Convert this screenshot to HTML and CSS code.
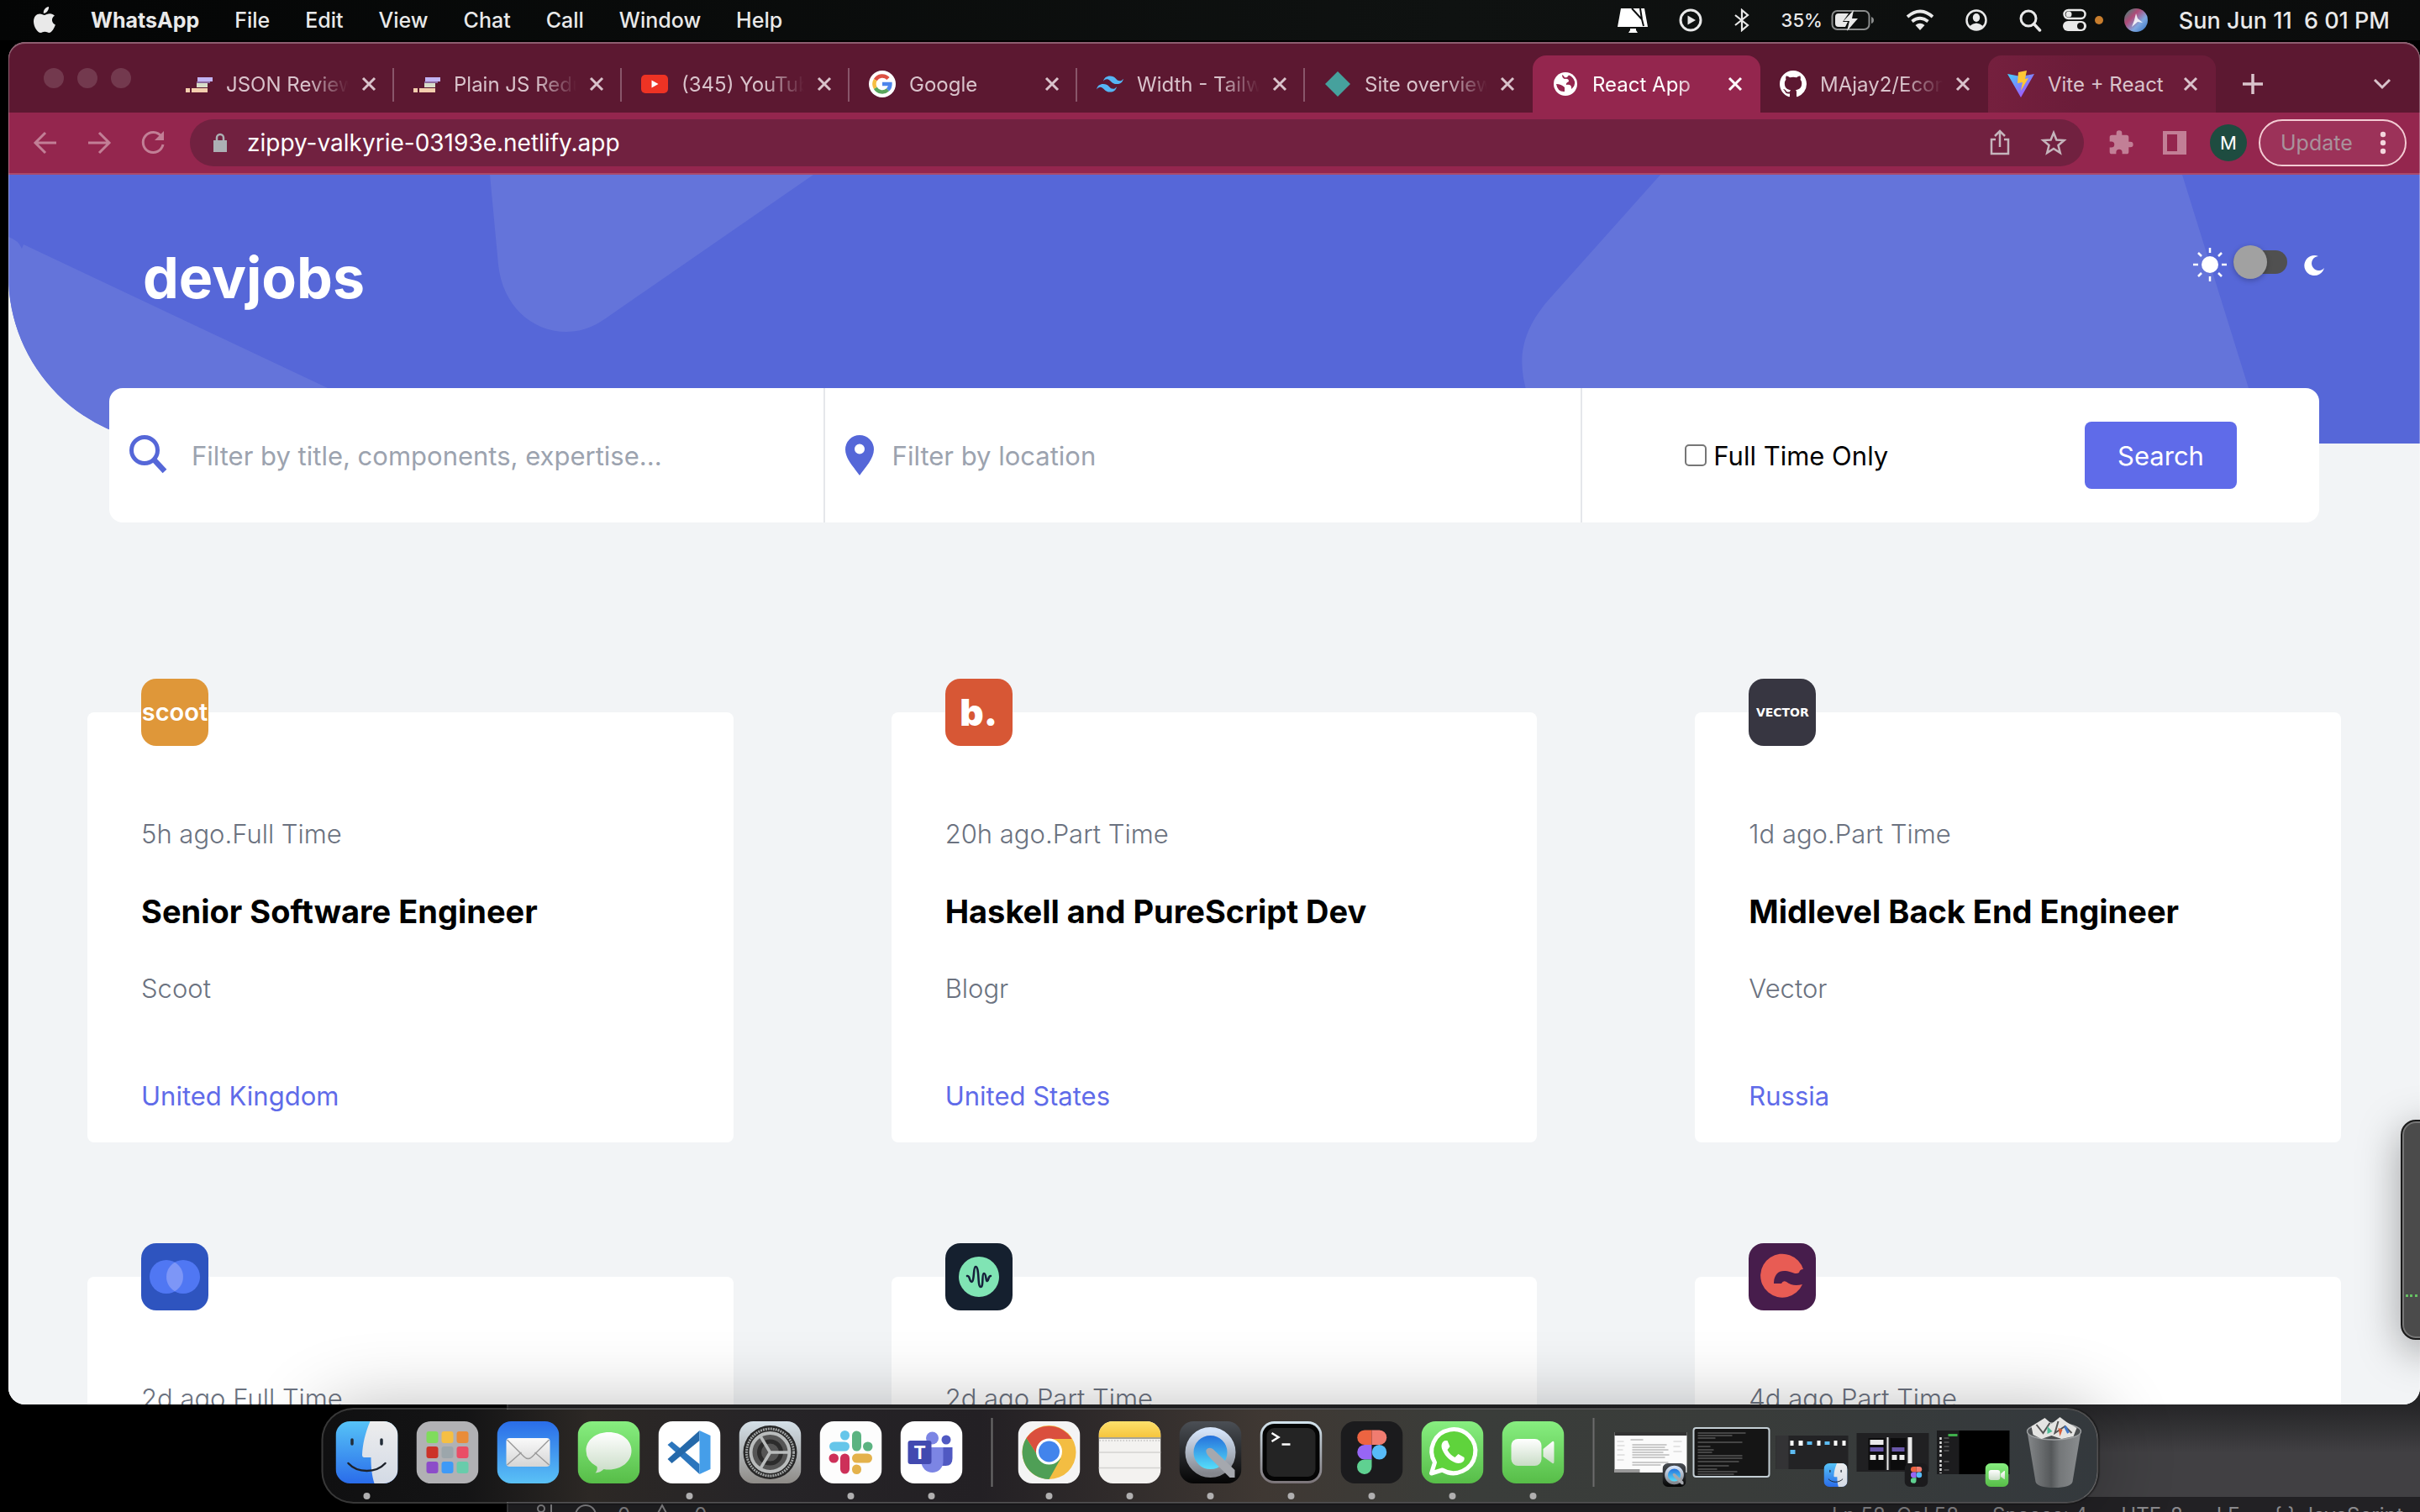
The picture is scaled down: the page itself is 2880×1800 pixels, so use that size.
FILE: index.html
```html
<!DOCTYPE html>
<html lang="en">
<head>
<meta charset="utf-8">
<title>React App</title>
<link rel="stylesheet" href="styles.css">
</head>
<body>

<svg class="defs" aria-hidden="true">
  <defs>
    <linearGradient id="g-blue" x2="0" y2="1"><stop offset="0" stop-color="#56c3f7"/><stop offset="1" stop-color="#2a6cea"/></linearGradient>
    <linearGradient id="g-face" x2="0" y2="1"><stop offset="0" stop-color="#ededee"/><stop offset="1" stop-color="#d3dae5"/></linearGradient>
    <linearGradient id="g-mail" x2="0" y2="1"><stop offset="0" stop-color="#2a6de8"/><stop offset="1" stop-color="#5ac1f6"/></linearGradient>
    <linearGradient id="g-green" x2="0" y2="1"><stop offset="0" stop-color="#87ee80"/><stop offset="1" stop-color="#57bd48"/></linearGradient>
    <linearGradient id="g-white" x2="0" y2="1"><stop offset="0" stop-color="#ffffff"/><stop offset="1" stop-color="#c9dcc6"/></linearGradient>
    <linearGradient id="g-paper" x2="0" y2="1"><stop offset="0" stop-color="#fafafa"/><stop offset="1" stop-color="#d5d5d5"/></linearGradient>
    <linearGradient id="g-gear" x2="0" y2="1"><stop offset="0" stop-color="#d5e0e8"/><stop offset="1" stop-color="#8e8b87"/></linearGradient>
    <linearGradient id="g-qt" x2="0" y2="1"><stop offset="0" stop-color="#4b4f55"/><stop offset="1" stop-color="#050505"/></linearGradient>
    <linearGradient id="g-ring" x2="0" y2="1"><stop offset="0" stop-color="#d4e3f8"/><stop offset="1" stop-color="#84878d"/></linearGradient>
    <linearGradient id="g-lens" x2="0" y2="1"><stop offset="0" stop-color="#1f63d8"/><stop offset="1" stop-color="#5cecfd"/></linearGradient>
    <linearGradient id="g-note" x2="0" y2="1"><stop offset="0" stop-color="#fde06c"/><stop offset="1" stop-color="#f6c53d"/></linearGradient>
    <linearGradient id="g-term" x2="0" y2="1"><stop offset="0" stop-color="#d3e4ee"/><stop offset="1" stop-color="#7b7478"/></linearGradient>
    <linearGradient id="g-bin"><stop offset="0" stop-color="#85888a"/><stop offset=".45" stop-color="#55585a"/><stop offset=".6" stop-color="#747779"/><stop offset="1" stop-color="#8a8d8f"/></linearGradient>
    <linearGradient id="g-vite" x2="1" y2="1"><stop offset="0" stop-color="#41d1ff"/><stop offset="1" stop-color="#bd34fe"/></linearGradient>
    <linearGradient id="g-siri" x2="1" y2="1"><stop offset="0" stop-color="#2f8f78"/><stop offset=".35" stop-color="#b04a78"/><stop offset=".65" stop-color="#7fa8e0"/><stop offset="1" stop-color="#2f6fc0"/></linearGradient>
    <clipPath id="tile"><rect width="74" height="74" rx="17"/></clipPath>
  </defs>

  <symbol id="app-finder" viewBox="0 0 74 74">
    <g clip-path="url(#tile)">
      <rect width="74" height="74" fill="url(#g-blue)"/>
      <path d="M41 0C35 14 32 28 31.500 40Q31.500 43 34 43H42C42 55 43 64 46 74H74V0Z" fill="url(#g-face)"/>
    </g>
    <path d="M19.500 22V27M54.500 22V27" stroke="#222c38" stroke-width="3.500" stroke-linecap="round"/>
    <path d="M15 50C26 62 48 62 59 50" fill="none" stroke="#1d222b" stroke-width="2.500" stroke-linecap="round"/>
  </symbol>
  <symbol id="app-quicktime" viewBox="0 0 74 74">
    <rect width="74" height="74" rx="17" fill="url(#g-qt)"/>
    <circle cx="37" cy="37" r="25" fill="url(#g-lens)" stroke="url(#g-ring)" stroke-width="10"/>
    <path d="M32 34Q35 30 40 33L66 58V67H60L36 43Q31 38 32 34Z" fill="#a5a8ae"/>
  </symbol>
  <symbol id="app-figma" viewBox="0 0 74 74">
    <rect width="74" height="74" rx="17" fill="#1b1b1d"/>
    <path d="M37 10.500V28H28.500a8.750 8.750 0 0 1 0-17.500Z" fill="#ed6441"/>
    <path d="M37 10.500H46a8.750 8.750 0 0 1 0 17.500H37Z" fill="#f07c70"/>
    <path d="M37 28V45.500H28.500a8.750 8.750 0 0 1 0-17.500Z" fill="#9766f5"/>
    <circle cx="46" cy="36.750" r="8.750" fill="#57bbf8"/>
    <path d="M37 45.500V54a8.750 8.750 0 1 1-8.750-8.500Z" fill="#5fd191"/>
  </symbol>
  <symbol id="app-facetime" viewBox="0 0 74 74">
    <rect width="74" height="74" rx="17" fill="url(#g-green)"/>
    <rect x="11" y="21" width="36" height="32" rx="8" fill="url(#g-white)"/>
    <path d="M49 33 60 24Q62 23 62 26V48Q62 51 60 50L49 42Z" fill="url(#g-white)"/>
  </symbol>
  <symbol id="i-sprint" viewBox="0 0 32 32">
    <path d="M14 8H32V13H14Z" fill="#c3b4f4"/><path d="M13 13H29V15H13Z" fill="#8d6b9f"/><path d="M13 15H26V20H13Z" fill="#d8ddc9"/><path d="M0 21H26V26H0Z" fill="#f4cfae"/><path d="M5 21H7V26H5Z" fill="#5d1831"/>
  </symbol>
  <symbol id="i-close" viewBox="0 0 24 24"><path d="M5 5 19 19M19 5 5 19" stroke="currentColor" stroke-width="3"/></symbol>
</svg>

<header class="menubar">
  <nav class="menus" aria-label="Menu bar">
    <button class="menu" aria-label="Apple"><svg class="apple" viewBox="0 0 26 32"><path fill="currentColor" d="M18 0c.3 2-.6 4-1.700 5.400C15 7 13.300 7.800 11.800 7.700c-.3-2 .6-3.900 1.700-5.200C14.600 1.100 16.500.1 18 0ZM25 10.800c-4.400 2.600-3.900 8.700.9 10.700C25 24.500 21.800 31 18.400 31c-2 0-2.700-1.200-5-1.200S10.300 31 8.400 31C4.400 31 0 23.500 0 17.500 0 11.500 3.700 8.400 7.300 8.400c2.400 0 4.300 1.500 5.800 1.500 1.400 0 3.600-1.600 6.400-1.600 2 0 4.200.9 5.500 2.500Z"/></svg></button>
    <button class="menu menu-app">WhatsApp</button>
    <button class="menu">File</button>
    <button class="menu">Edit</button>
    <button class="menu">View</button>
    <button class="menu">Chat</button>
    <button class="menu">Call</button>
    <button class="menu">Window</button>
    <button class="menu">Help</button>
  </nav>
  <div class="extras">
    <svg width="36" height="32" viewBox="0 0 36 32"><path fill="#fff" d="M4 2H32L36 24H0ZM15 26H22V28L24 31H13L15 28Z"/><path d="M17 2 29 15 31 23M27 2 29 15" stroke="#0d0f0f" stroke-width="2" fill="none"/></svg>
    <svg width="28" height="28" viewBox="0 0 28 28"><circle cx="14" cy="14" r="12" fill="none" stroke="currentColor" stroke-width="3"/><path d="M10.500 8.500 20 14 10.500 19.500Z" fill="currentColor"/></svg>
    <svg width="20" height="28" viewBox="0 0 20 28"><path d="M2 8 17 20 10 26V2L17 8 2 20" fill="none" stroke="currentColor" stroke-width="2.200"/></svg>
    <span class="battery">35%
      <svg width="52" height="26" viewBox="0 0 52 26"><rect x="1.500" y="2" width="44" height="22" rx="6" fill="none" stroke="#8a8c8c" stroke-width="2"/><path d="M48 9Q51 10 51 13T48 17Z" fill="#8a8c8c"/><path d="M5 9Q5 5 9 5H21L14 15H20L17 21H9Q5 21 5 17Z" fill="currentColor"/><path d="M27 1 15 14H22L19 26 32 11H25Z" fill="currentColor"/></svg>
    </span>
    <svg width="34" height="26" viewBox="0 0 34 26"><path d="M2 9Q17-4 32 9M7.500 14.500Q17 7 26.500 14.500" fill="none" stroke="currentColor" stroke-width="3.800"/><path d="M11.500 19Q17 14.500 22.500 19L17 25Z" fill="currentColor"/></svg>
    <svg width="26" height="26" viewBox="0 0 26 26"><circle cx="13" cy="13" r="11.500" fill="none" stroke="currentColor" stroke-width="2.500"/><ellipse cx="13" cy="10" rx="4.200" ry="5" fill="currentColor"/><path d="M5 20Q13 13 21 20 17 25 13 25T5 20Z" fill="currentColor"/></svg>
    <div class="extras-tail">
      <svg width="28" height="28" viewBox="0 0 28 28"><circle cx="12" cy="12" r="9" fill="none" stroke="currentColor" stroke-width="3"/><path d="M18.500 18.500 25.500 26" stroke="currentColor" stroke-width="3.500" stroke-linecap="round"/></svg>
      <span class="control"><svg width="28" height="28" viewBox="0 0 28 28"><rect x="1.500" y="2" width="25" height="10" rx="5" fill="none" stroke="currentColor" stroke-width="2.500"/><circle cx="7" cy="7" r="3.500" fill="currentColor"/><rect x="0" y="15" width="28" height="12" rx="6" fill="currentColor"/><circle cx="21" cy="21" r="4" fill="#111"/></svg><i class="mic-dot"></i></span>
      <svg width="28" height="28" viewBox="0 0 28 28"><circle cx="14" cy="14" r="14" fill="url(#g-siri)"/><path d="M14 6 16 12 22 17 16 16 9 22 12 14Z" fill="#fff" opacity=".85"/></svg>
    </div>
    <time>Sun Jun 11&nbsp; 6 01 PM</time>
  </div>
</header>

<div class="editor" aria-hidden="true">
  <div class="editor-status">
    <span class="status-left"><svg width="20" height="28" viewBox="0 0 20 28"><circle cx="5" cy="6" r="4" fill="none" stroke="currentColor" stroke-width="2"/><path d="M17 1V26" stroke="currentColor" stroke-width="2"/></svg><svg width="28" height="28" viewBox="0 0 28 28"><circle cx="14" cy="14" r="12" fill="none" stroke="currentColor" stroke-width="2"/></svg>0<svg width="28" height="28" viewBox="0 0 28 28"><path d="M14 2 27 26H1Z" fill="none" stroke="currentColor" stroke-width="2"/></svg>0</span>
    <span class="status-right"><span>Ln 58, Col 58</span><span>Spaces: 4</span><span>UTF-8</span><span>LF</span><span>{ } JavaScript</span></span>
  </div>
</div>

<section class="browser">
  <div class="tabstrip">
    <div class="lights"><i></i><i></i><i></i></div>
    <div class="tabs" role="tablist">
      <div class="tab" role="tab"><svg class="fav"><use href="#i-sprint"/></svg><span class="tab-title">JSON Review</span><button class="tab-close" aria-label="Close"><svg><use href="#i-close"/></svg></button></div>
      <div class="tab" role="tab"><svg class="fav"><use href="#i-sprint"/></svg><span class="tab-title">Plain JS Redux</span><button class="tab-close" aria-label="Close"><svg><use href="#i-close"/></svg></button></div>
      <div class="tab" role="tab"><svg class="fav" viewBox="0 0 32 32"><rect x="0" y="5" width="32" height="22" rx="5" fill="#ee3324"/><path d="M12.500 11.500 20.500 16 12.500 20.500Z" fill="#fff"/></svg><span class="tab-title">(345) YouTube</span><button class="tab-close" aria-label="Close"><svg><use href="#i-close"/></svg></button></div>
      <div class="tab" role="tab"><svg class="fav" viewBox="0 0 32 32"><circle cx="16" cy="16" r="16" fill="#fff"/><g fill="none" stroke-width="4.500"><path d="M23 9.500A9.500 9.500 0 0 0 7.800 11.200" stroke="#dd5144"/><path d="M7.800 11.200a9.500 9.500 0 0 0 0 9.600" stroke="#f6be42"/><path d="M7.800 20.800A9.500 9.500 0 0 0 22.500 22.900" stroke="#58a65c"/><path d="M22.500 22.900Q25.500 20 25.400 16H16" stroke="#4d86ec"/></g></svg><span class="tab-title">Google</span><button class="tab-close" aria-label="Close"><svg><use href="#i-close"/></svg></button></div>
      <div class="tab" role="tab"><svg class="fav" viewBox="0 0 32 32"><path fill="#55b6f5" d="M8 12.800C9 8.600 11.700 6.500 16 6.500c6.400 0 7.200 4.800 10.400 5.600 2.100.5 4-.3 5.600-2.400-1 4.300-3.700 6.400-8 6.400-6.400 0-7.200-4.800-10.400-5.600-2.100-.5-4 .2-5.600 2.300ZM0 22.400C1 18.100 3.700 16 8 16c6.400 0 7.200 4.800 10.400 5.600 2.100.5 4-.3 5.600-2.400-1 4.300-3.700 6.400-8 6.400-6.400 0-7.200-4.800-10.400-5.600-2.100-.5-4 .3-5.600 2.400Z"/></svg><span class="tab-title">Width - Tailwind</span><button class="tab-close" aria-label="Close"><svg><use href="#i-close"/></svg></button></div>
      <div class="tab" role="tab"><svg class="fav" viewBox="0 0 32 32"><path d="M16 1 31 16 16 31 1 16Z" fill="#46a19d"/></svg><span class="tab-title">Site overview</span><button class="tab-close" aria-label="Close"><svg><use href="#i-close"/></svg></button></div>
      <div class="tab tab-active" role="tab" aria-selected="true"><svg class="fav" viewBox="0 0 32 32"><circle cx="16" cy="16" r="14" fill="#fff"/><path d="M5 16Q11 16 15 20V25Q7 26 5 16ZM12 5Q12 9 15 10 20 9 20 13 16 15 17 17 24 16 23 22 28 18 27 13 25 7 20 5.500 18 9 15 8 14 6 12 5Z" fill="#94264e"/></svg><span class="tab-title">React App</span><button class="tab-close" aria-label="Close"><svg><use href="#i-close"/></svg></button></div>
      <div class="tab" role="tab"><svg class="fav" viewBox="0 0 16 16"><path fill="#fff" d="M8 0C3.580 0 0 3.580 0 8c0 3.540 2.290 6.530 5.470 7.590.4.070.55-.17.55-.38 0-.19-.01-.82-.01-1.490-2.010.37-2.530-.49-2.690-.94-.09-.23-.48-.94-.82-1.130-.28-.15-.68-.52-.01-.53.63-.01 1.080.58 1.230.82.72 1.210 1.870.87 2.330.66.070-.52.28-.87.51-1.070-1.780-.2-3.640-.89-3.640-3.950 0-.87.31-1.590.82-2.150-.08-.2-.36-1.020.08-2.120 0 0 .67-.21 2.200.82.64-.18 1.320-.27 2-.27s1.360.09 2 .27c1.530-1.040 2.200-.82 2.200-.82.44 1.100.16 1.920.08 2.120.51.56.82 1.270.82 2.150 0 3.070-1.870 3.750-3.650 3.950.29.25.54.73.54 1.480 0 1.070-.01 1.930-.01 2.200 0 .21.15.46.55.38A8.010 8.010 0 0 0 16 8c0-4.420-3.580-8-8-8Z"/></svg><span class="tab-title">MAjay2/Ecommerce</span><button class="tab-close" aria-label="Close"><svg><use href="#i-close"/></svg></button></div>
      <div class="tab tab-hover" role="tab"><svg class="fav" viewBox="0 0 32 32"><path d="M0 4 16 32 32 4 16 7Z" fill="url(#g-vite)"/><path d="M13 2 23 0 21 10 25 9 16 24 18 14 12 15Z" fill="#fdc735"/></svg><span class="tab-title tab-title-whole">Vite + React</span><button class="tab-close" aria-label="Close"><svg><use href="#i-close"/></svg></button></div>
    </div>
    <button class="strip-button" aria-label="New tab"><svg viewBox="0 0 24 24"><path d="M12 0V24M0 12H24" stroke="currentColor" stroke-width="3.500"/></svg></button>
    <button class="strip-button strip-more" aria-label="Search tabs"><svg viewBox="0 0 24 24"><path d="M3 7 12 16 21 7" fill="none" stroke="currentColor" stroke-width="3"/></svg></button>
  </div>

  <div class="toolbar">
    <div class="nav-buttons">
      <button class="tool" aria-label="Back"><svg viewBox="0 0 32 32"><path d="M29 16H5M16 4 4 16 16 28" fill="none" stroke="currentColor" stroke-width="3"/></svg></button>
      <button class="tool" aria-label="Forward"><svg viewBox="0 0 32 32"><path d="M3 16H27M16 4 28 16 16 28" fill="none" stroke="currentColor" stroke-width="3"/></svg></button>
      <button class="tool" aria-label="Reload"><svg viewBox="0 0 32 32"><path d="M26 8.500A12 12 0 1 0 28 18" fill="none" stroke="currentColor" stroke-width="3"/><path d="M29 2V13H18Z" fill="currentColor"/></svg></button>
    </div>
    <div class="omnibox">
      <svg class="lock" viewBox="0 0 20 24"><path d="M2 9H18V23H2Z" fill="currentColor"/><path d="M6 10V6a4 4 0 0 1 8 0V10" fill="none" stroke="currentColor" stroke-width="2.500"/></svg>
      <input class="url" type="text" aria-label="Address" value="zippy-valkyrie-03193e.netlify.app">
      <button class="tool" aria-label="Share"><svg viewBox="0 0 32 32"><path d="M11 12H6V29H26V12H21M16 21V3M10 8 16 2 22 8" fill="none" stroke="currentColor" stroke-width="2.500"/></svg></button>
      <button class="tool" aria-label="Bookmark"><svg viewBox="0 0 32 32"><path d="M16 4 19.400 12.500 28.500 13 21.500 19 23.800 28 16 23 8.200 28 10.500 19 3.500 13 12.600 12.500Z" fill="none" stroke="currentColor" stroke-width="2.500"/></svg></button>
    </div>
    <div class="tools">
      <button class="tool" aria-label="Extensions"><svg viewBox="0 0 24 24"><path fill="currentColor" d="M20.500 11H19V7a2 2 0 0 0-2-2h-4V3.500a2.500 2.500 0 0 0-5 0V5H4a2 2 0 0 0-2 2v3.800h1.500a2.700 2.700 0 0 1 0 5.400H2V20a2 2 0 0 0 2 2h3.800v-1.500a2.700 2.700 0 0 1 5.400 0V22H17a2 2 0 0 0 2-2v-4h1.500a2.500 2.500 0 0 0 0-5Z"/></svg></button>
      <button class="tool" aria-label="Side panel"><svg viewBox="0 0 32 32"><path fill="currentColor" fill-rule="evenodd" d="M2 2H30V30H2ZM7 6V26H19V6Z"/></svg></button>
    </div>
    <button class="avatar" aria-label="Profile">M</button>
    <button class="update">Update<svg viewBox="0 0 8 28"><g fill="#f3d6dd"><circle cx="4" cy="4" r="3.200"/><circle cx="4" cy="14" r="3.200"/><circle cx="4" cy="24" r="3.200"/></g></svg></button>
  </div>

  <main class="page">
    <header class="hero">
      <svg class="hero-shapes" viewBox="0 0 2870 320" preserveAspectRatio="xMidYMin slice"><g fill="#6474da"><path d="M0 74Q12 78 16 88L18 83 520 320H0Z"/><path d="M573 0 583 107C588 155 622 187 664 187 686 187 702 178 718 166L958 0Z"/><path d="M1966 0 1832 150C1798 190 1796 224 1808 262L1830 320H2740L2666 254 2587 0Z"/></g></svg>
      <h1 class="brand">devjobs</h1>
      <div class="theme">
        <svg width="40" height="48" viewBox="0 0 40 48"><circle cx="20" cy="27" r="10" fill="#fff"/><path d="M20 7V13M20 41V47M0 27H6M34 27H40M6 13 10 17M30 37 34 41M34 13 30 17M10 37 6 41" stroke="#fff" stroke-width="2.500"/></svg>
        <input class="switch" type="checkbox" role="switch" aria-label="Dark mode">
        <svg class="moon" width="24" height="48" viewBox="0 0 24 48"><path d="M17 17A12 12 0 1 0 24 31 8.500 8.500 0 1 1 17 17Z" fill="#fff"/></svg>
      </div>
    </header>

    <form class="search" onsubmit="return false">
      <label class="field"><svg width="48" height="52" viewBox="0 0 48 52"><circle cx="18" cy="20" r="15.500" fill="none" stroke="#5567d8" stroke-width="5"/><path d="M29 31 42 45" stroke="#5567d8" stroke-width="6.500"/></svg><input class="field-title" type="text" aria-label="Title" placeholder="Filter by title, components, expertise..."></label>
      <label class="field"><svg width="34" height="48" viewBox="0 0 34 48"><path fill="#5567d8" fill-rule="evenodd" d="M17 0A17 17 0 0 1 34 17C34 28 24 38 17 48 10 38 0 28 0 17A17 17 0 0 1 17 0ZM17 10.500A6 6 0 1 0 17 22.500 6 6 0 0 0 17 10.500Z"/></svg><input class="field-place" type="text" aria-label="Location" placeholder="Filter by location"></label>
      <div class="actions">
        <label class="fulltime"><input type="checkbox">Full Time Only</label>
        <button class="submit">Search</button>
      </div>
    </form>

    <div class="jobs">
      <article class="job"><div class="logo logo-scoot">scoot</div><p class="meta">5h ago.Full Time</p><h2>Senior Software Engineer</h2><p class="company">Scoot</p><p class="place">United Kingdom</p></article>
      <article class="job"><div class="logo logo-blogr">b.</div><p class="meta">20h ago.Part Time</p><h2>Haskell and PureScript Dev</h2><p class="company">Blogr</p><p class="place">United States</p></article>
      <article class="job"><div class="logo logo-vector">VECTOR</div><p class="meta">1d ago.Part Time</p><h2>Midlevel Back End Engineer</h2><p class="company">Vector</p><p class="place">Russia</p></article>
      <article class="job"><div class="logo logo-office"><svg viewBox="0 0 80 80"><circle cx="30" cy="40" r="20" fill="#5077f3"/><circle cx="50" cy="40" r="20" fill="#5077f3"/><path d="M40 22.700a20 20 0 0 1 0 34.600 20 20 0 0 1 0-34.600Z" fill="#7d96f7"/></svg></div><p class="meta">2d ago.Full Time</p></article>
      <article class="job"><div class="logo logo-pod"><svg viewBox="0 0 80 80"><circle cx="40" cy="40" r="24" fill="#80e4b4"/><path d="M26 39C29 38 29 46 31 46 35 46 33 28 36 28 41 28 38 52 42 52 46 52 43 36 46 36 49 36 48 46 50 45 52 44 51 39 54 39" fill="none" stroke="#15203a" stroke-width="2.500" stroke-linecap="round"/></svg></div><p class="meta">2d ago.Part Time</p></article>
      <article class="job"><div class="logo logo-creative"><svg viewBox="0 0 80 80"><path d="M65 31A26 26 0 1 0 64 49C56 51 50 50 45 46Q41 44 39 48H30C30 37 36 32 44 33 52 34 56 38 60 35Q61 31 65 31Z" fill="#e85c54"/></svg></div><p class="meta">4d ago.Part Time</p></article>
    </div>
  </main>
</section>

<aside class="side-window" aria-hidden="true"></aside>

<nav class="dock" aria-label="Dock">
  <button class="app running" aria-label="Finder"><svg><use href="#app-finder"/></svg></button>
  <button class="app" aria-label="Launchpad"><svg viewBox="0 0 74 74"><rect width="74" height="74" rx="17" fill="#b1b1b4"/><g><rect x="12" y="12" width="14" height="14" rx="3" fill="#7fdc5c"/><rect x="30" y="12" width="14" height="14" rx="3" fill="#f5bf43"/><rect x="48" y="12" width="14" height="14" rx="3" fill="#e98c39"/><rect x="12" y="30" width="14" height="14" rx="3" fill="#cc3328"/><rect x="30" y="30" width="14" height="14" rx="3" fill="#9ca6ab"/><rect x="48" y="30" width="14" height="14" rx="3" fill="#ea4e66"/><rect x="12" y="48" width="14" height="14" rx="3" fill="#8c4cc9"/><rect x="30" y="48" width="14" height="14" rx="3" fill="#3f9af6"/><rect x="48" y="48" width="14" height="14" rx="3" fill="#68ccab"/></g></svg></button>
  <button class="app" aria-label="Mail"><svg viewBox="0 0 74 74"><rect width="74" height="74" rx="17" fill="url(#g-mail)"/><rect x="11" y="20" width="52" height="34" rx="4" fill="url(#g-paper)"/><path d="M12 52 29 37M62 52 45 37M12 22 32 42Q37 47 42 42L62 22" fill="none" stroke="#9b9b9b" stroke-width="1.500"/></svg></button>
  <button class="app" aria-label="Messages"><svg viewBox="0 0 74 74"><rect width="74" height="74" rx="17" fill="url(#g-green)"/><path d="M37 13C52 13 64 22 64 35S52 57.500 37 57.500Q34 57.500 31 57 27 61 21 61.500 24 58 23 54 10 47 10 35C10 22 22 13 37 13Z" fill="url(#g-white)"/></svg></button>
  <button class="app running" aria-label="Visual Studio Code"><svg viewBox="0 0 74 74"><rect width="74" height="74" rx="17" fill="#fff"/><path d="M11 28 16 24 49 51V63Z" fill="#2c76bd"/><path d="M11 45 16 50 49 23V11Z" fill="#2569aa"/><path d="M49 11 62 17V57L49 63Z" fill="#459ee9"/></svg></button>
  <button class="app" aria-label="System Settings"><svg viewBox="0 0 74 74"><rect width="74" height="74" rx="17" fill="url(#g-gear)"/><circle cx="37" cy="37" r="32" fill="#272727"/><circle cx="37" cy="37" r="28" fill="none" stroke="#9fa2a2" stroke-width="3" stroke-dasharray="2 1"/><circle cx="37" cy="37" r="23" fill="#555" stroke="#b9bcbc" stroke-width="4"/><circle cx="37" cy="37" r="13" fill="none" stroke="#2c2c2c" stroke-width="5"/><path d="M37 37H60M37 37 25 17M37 37 25 57" stroke="#b9bcbc" stroke-width="3.500"/></svg></button>
  <button class="app running" aria-label="Slack"><svg viewBox="0 0 74 74"><rect width="74" height="74" rx="17" fill="#fdfdfd"/><g stroke-width="11" stroke-linecap="round"><path d="M17 30H30M30 16.500V17" stroke="#66c6ea"/><path d="M44 17V30M57 30H57.500" stroke="#5bb381"/><path d="M44 44H57M44 57V57.500" stroke="#e4b24b"/><path d="M30 44V57M16.500 44H17" stroke="#cd3059"/></g></svg></button>
  <button class="app running" aria-label="Microsoft Teams"><svg viewBox="0 0 74 74"><rect width="74" height="74" rx="17" fill="#fff"/><circle cx="38" cy="20" r="7.500" fill="#7c85e4"/><circle cx="54.500" cy="22" r="5.500" fill="#5059c2"/><path d="M48 31H62V44Q62 53 54 53H48Z" fill="#5059c2"/><path d="M25 31H51V48A13 13 0 0 1 25 48Z" fill="#7c85e4"/><rect x="9" y="23" width="28" height="28" rx="3" fill="#4249b0"/><text x="23" y="45" text-anchor="middle" class="t-letter">T</text></svg></button>
  <i class="dock-line"></i>
  <button class="app running" aria-label="Google Chrome"><svg viewBox="0 0 74 74"><rect width="74" height="74" rx="17" fill="#f4f4f4"/><circle cx="37" cy="37" r="32" fill="#f3bd42"/><path d="M10 20A32 32 0 0 0 37 69L51 44 37 50 25 43Z" fill="#4f9f56"/><path d="M10 20A32 32 0 0 1 64 21H37L25 43Z" fill="#da4f3e"/><circle cx="37" cy="36" r="15.500" fill="#fff"/><circle cx="37" cy="36" r="12.500" fill="#4284ec"/></svg></button>
  <button class="app running" aria-label="Notes"><svg viewBox="0 0 74 74"><g clip-path="url(#tile)"><rect width="74" height="74" fill="#f3f2f0"/><rect width="74" height="19" fill="url(#g-note)"/><path d="M0 20H74" stroke="#8b8878" stroke-width="1.500"/><path d="M1 23H74" stroke="#aaa" stroke-dasharray="1.500 2"/><path d="M0 37H74M0 55.500H74" stroke="#d3d2d0" stroke-width="1.500"/></g></svg></button>
  <button class="app running" aria-label="QuickTime Player"><svg><use href="#app-quicktime"/></svg></button>
  <button class="app running" aria-label="Terminal"><svg viewBox="0 0 74 74"><rect width="74" height="74" rx="17" fill="url(#g-term)"/><rect x="3" y="3" width="68" height="68" rx="14" fill="#050505"/><rect x="8" y="8" width="58" height="58" rx="9" fill="#242424"/><path d="M14 14 22 19 14 24M26 27.500H36" fill="none" stroke="#fff" stroke-width="2.500"/></svg></button>
  <button class="app running" aria-label="Figma"><svg><use href="#app-figma"/></svg></button>
  <button class="app running" aria-label="WhatsApp"><svg viewBox="0 0 74 74"><rect width="74" height="74" rx="17" fill="url(#g-green)"/><path d="M12 62 16 49A26 26 0 1 1 25 58Z" fill="#5fd33c" stroke="#fff" stroke-width="5" stroke-linejoin="round"/><path d="M28 23C24 25 23 29 25 34 29 43 36 49 44 50 49 50 52 47 51 43L44 39 40 43C36 41 33 38 31 34L34 30 31 23Z" fill="#fff"/></svg></button>
  <button class="app running" aria-label="FaceTime"><svg><use href="#app-facetime"/></svg></button>
  <i class="dock-line"></i>
  <div class="thumbs">
    <button class="thumb" aria-label="Recording"><svg viewBox="0 0 86 74"><rect y="13" width="86" height="48" fill="#fbfbfb"/><path d="M0 13H86V17H0Z" fill="#333"/><path d="M19 22H34M21 28H62M21 31H60M21 34H64M21 37H58M21 40H65M21 43H60M21 49H64M21 52H55" stroke="#9a9a9a"/><path d="M3 24H11M3 29H12M3 34H10M3 40H12M3 46H11M70 24H80M70 30H78M70 36H80" stroke="#ccc"/><path d="M0 57H30V61H0Z" fill="#999"/></svg><svg class="badge"><use href="#app-quicktime"/></svg></button>
    <button class="thumb" aria-label="Terminal window"><svg viewBox="0 0 86 74"><rect x="-2" y="8" width="90" height="58" rx="3" fill="#151515" stroke="#c3ced4" stroke-width="2"/><path d="M3 14H60M3 17H44M3 20H24M3 25H56M3 30H18M3 34H22M3 37H20M3 41H56M3 44H56M3 48H52M3 53H40M3 57H26M3 60H50M3 63H46" stroke="#777"/></svg></button>
    <button class="thumb" aria-label="Finder window"><svg viewBox="0 0 86 74"><rect y="17" width="86" height="40" fill="#232325"/><rect y="17" width="15" height="40" fill="#333335"/><g fill="#fff"><path d="M17 23H21V29H17ZM27 23H32V29H27ZM49 23H53V29H49ZM69 23H73V29H69ZM79 23H83V29H79Z"/></g><path d="M37 24H43V28H37ZM58 24H64V28H58ZM17 34H23V39H17Z" fill="#5dbcf2"/></svg><svg class="badge"><use href="#app-finder"/></svg></button>
    <button class="thumb" aria-label="Figma window"><svg viewBox="0 0 86 74"><rect y="14" width="86" height="46" fill="#202022"/><path d="M14 20H34V58H14ZM40 20H59V58H40Z" fill="#0c0c0d"/><path d="M16 22H32V28H16ZM16 40H23V46H16ZM26 40H32V46H26ZM42 40H48V46H42ZM51 40H57V46H51ZM36 19H38V58H36ZM61 19H66V50H61Z" fill="#eaeaea"/><path d="M16 31H32V36H16ZM42 31H57V36H42Z" fill="#6857a8"/></svg><svg class="badge"><use href="#app-figma"/></svg></button>
    <button class="thumb" aria-label="FaceTime window"><svg viewBox="0 0 86 74"><rect y="11" width="86" height="52" fill="#000"/><rect y="11" width="26" height="52" fill="#1c1c1e"/><rect x="13" y="15" width="11" height="3" fill="#3fae4b"/><path d="M4 19V42M4 46V62" stroke="#ddd" stroke-width="2.500" stroke-dasharray="3 2"/><path d="M8 20H14M8 25H14M8 30H14M8 35H14M8 48H14M8 58H14" stroke="#777"/></svg><svg class="badge"><use href="#app-facetime"/></svg></button>
  </div>
  <button class="trash" aria-label="Trash"><svg viewBox="0 0 66 86"><path d="M1 18 11 78Q13 85 33 85T55 78L65 18Z" fill="url(#g-bin)"/><ellipse cx="33" cy="18" rx="32" ry="10" fill="#4b4e50" stroke="#9da0a2" stroke-width="1.500"/><path d="M6 12 22 2 30 9 40 1 48 7 60 14 56 24 42 27 30 23 18 27 8 22Z" fill="#e4e4e2"/><path d="M12 10 20 20 28 8M38 6 34 20 46 12 54 20" fill="none" stroke="#555" stroke-width="2"/><path d="M25 12 31 18 25 21Z" fill="#4ebc96"/><path d="M38 14 43 16 40 24Z" fill="#d85f3a"/><path d="M46 12 50 20" stroke="#3f76c9" stroke-width="3"/></svg></button>
</nav>

</body>
</html>
```
FILE: styles.css
```css
* { box-sizing: border-box; }

html, body { height: 100%; }

body {
  margin: 0;
  position: relative;
  overflow: hidden;
  background: #000;
  color: #000;
  font-family: Inter, "Liberation Sans", sans-serif;
}

h1, h2, p { margin: 0; }
button, input { font: inherit; }
button { padding: 0; border: 0; background: none; color: inherit; }
svg { display: block; flex: none; }
.defs { position: absolute; width: 0; height: 0; }

/* System menu bar */
.menubar {
  display: flex;
  justify-content: space-between;
  align-items: center;
  height: 48px;
  padding: 0 36px 0 40px;
  background: linear-gradient(90deg, #040505, #0f1211 60%, #0b0c0c);
  color: #e9e9e9;
  font-size: 25px;
  font-weight: 500;
}
.menus { display: flex; align-items: center; gap: 42px; }
.apple { width: 26px; height: 32px; }
.menu-app { font-weight: 700; }
.extras { display: flex; align-items: center; gap: 37px; }
.extras-tail { display: flex; align-items: center; gap: 25px; }
.extras time { font-size: 27px; }
.battery { display: flex; align-items: center; gap: 10px; font-size: 22px; }
.control { display: flex; align-items: center; gap: 10px; }
.mic-dot { width: 10px; height: 10px; border-radius: 50%; background: #c87d2d; }

/* Editor window behind the browser */
.editor {
  position: absolute;
  left: 603px;
  right: 0;
  bottom: 0;
  height: 150px;
  display: flex;
  flex-direction: column;
  justify-content: flex-end;
  border-left: 2px solid #3a3a3c;
  background: linear-gradient(#242426 20px, #414043 80px);
}
.editor-status {
  display: flex;
  justify-content: space-between;
  align-items: flex-start;
  height: 18px;
  padding: 8px 20px 0 34px;
  overflow: hidden;
  background: #222124;
  color: #8a898c;
  font-size: 24px;
  line-height: 28px;
}
.status-left { display: flex; gap: 24px; }
.status-right { display: flex; gap: 40px; }

/* Browser window */
.browser {
  position: absolute;
  inset: 50px 0 128px 10px;
  display: flex;
  flex-direction: column;
  overflow: hidden;
  border-radius: 20px;
  background: #f2f4f6;
}
.browser::after {
  content: "";
  position: absolute;
  inset: 0;
  border: 2px solid rgba(255, 255, 255, .3);
  border-left-width: 1px;
  border-right-width: 1px;
  border-bottom: 0;
  border-radius: 20px;
  pointer-events: none;
}
.tabstrip {
  display: flex;
  flex: none;
  height: 84px;
  padding-right: 33px;
  background: #5c1831;
  color: #d9c3cb;
  font-size: 24px;
}
.lights { display: flex; gap: 16px; width: 188px; padding: 31px 0 0 42px; }
.lights i { width: 24px; height: 24px; border-radius: 50%; background: #73394e; }
.tabs { display: flex; flex: 0 1 2439px; min-width: 0; padding-top: 16px; }
.tab {
  position: relative;
  display: flex;
  flex: 1 1 0;
  align-items: center;
  gap: 12px;
  min-width: 0;
  padding: 0 18px 0 23px;
}
.tab::after {
  content: "";
  position: absolute;
  right: 0;
  top: 15px;
  width: 2px;
  height: 40px;
  background: #89566a;
}
.tab:nth-child(n+6)::after { display: none; }
.fav { width: 32px; height: 32px; margin-right: 4px; }
.tab-title {
  flex: 1;
  overflow: hidden;
  white-space: nowrap;
  -webkit-mask-image: linear-gradient(90deg, #000 calc(100% - 48px), transparent);
  mask-image: linear-gradient(90deg, #000 calc(100% - 48px), transparent);
}
.tab-title-whole { -webkit-mask-image: none; mask-image: none; }
.tab-close svg { width: 24px; height: 24px; }
.tab-active {
  border-radius: 16px 16px 0 0;
  background: #94264e;
  color: #fff;
}
.tab-hover {
  border-radius: 16px 16px 0 0;
  background: linear-gradient(90deg, #75203e, #6b1c39 40%);
}
.strip-button { margin: 16px 0 0 32px; }
.strip-button svg { width: 24px; height: 24px; }
.strip-more { margin-left: auto; }

.toolbar {
  display: flex;
  flex: none;
  align-items: center;
  height: 74px;
  padding: 0 16px 0 28px;
  border-bottom: 2px solid #aa4a6b;
  background: #94264e;
  color: #c27f96;
}
.nav-buttons, .tools { display: flex; gap: 32px; }
.tool svg { width: 32px; height: 32px; }
.omnibox {
  display: flex;
  flex: 1;
  align-items: center;
  gap: 32px;
  height: 56px;
  margin: 0 28px;
  padding: 0 20px 0 26px;
  border-radius: 28px;
  background: #712140;
  color: #c5b5bc;
}
.lock { width: 20px; height: 24px; color: #acb0b4; }
.url {
  flex: 1;
  min-width: 0;
  margin-left: -10px;
  padding: 0;
  border: 0;
  outline: 0;
  background: none;
  color: #fff;
  font-size: 28px;
}
.avatar {
  width: 44px;
  height: 44px;
  margin: 0 14px 0 26px;
  border-radius: 50%;
  background: #1e4c40;
  color: #fff;
  font-size: 22px;
}
.update {
  display: flex;
  align-items: center;
  justify-content: space-between;
  width: 176px;
  height: 56px;
  padding: 0 22px 0 24px;
  border: 2px solid #f3cbd3;
  border-radius: 28px;
  background: #9c3259;
  color: #a9929c;
  font-size: 25px;
}
.update svg { width: 8px; height: 28px; }

/* Job board */
.page { flex: 1; min-height: 0; overflow: hidden; background: #f2f4f6; }
.hero {
  position: relative;
  display: flex;
  justify-content: space-between;
  align-items: flex-start;
  height: 320px;
  padding: 80px 114px 0 160px;
  overflow: hidden;
  border-bottom-left-radius: 200px;
  background: #5667d8;
}
.hero-shapes { position: absolute; inset: 0; width: 100%; height: 100%; }
.brand {
  position: relative;
  color: #fff;
  font-size: 68px;
  font-weight: 700;
  line-height: 84px;
}
.theme { position: relative; display: flex; align-items: center; height: 48px; gap: 8px; }
.moon { margin-left: 12px; }
.switch {
  appearance: none;
  position: relative;
  width: 64px;
  height: 28px;
  margin: 0;
  border-radius: 14px;
  background: #505050;
}
.switch::before {
  content: "";
  position: absolute;
  left: 0;
  top: -6px;
  width: 40px;
  height: 40px;
  border-radius: 50%;
  background: #a1a1a1;
  box-shadow: 0 2px 6px rgba(0, 0, 0, .25);
}

.search {
  position: relative;
  display: grid;
  grid-template-columns: 34fr 36fr 35fr;
  height: 160px;
  margin: -66px 120px 0;
  border-radius: 16px;
  background: #fff;
  font-size: 31px;
}
.field {
  display: flex;
  align-items: center;
  gap: 22px;
  padding-left: 24px;
  border-right: 2px solid #e5e7eb;
}
.field input {
  flex: 1;
  min-width: 0;
  padding: 0;
  border: 0;
  outline: 0;
  background: none;
}
.field .field-title { padding-left: 4px; }
.field input::placeholder { color: #9ca3af; opacity: 1; }
.actions {
  display: flex;
  align-items: center;
  justify-content: space-between;
  padding: 0 98px 0 122px;
}
.fulltime { display: flex; align-items: center; gap: 8px; }
.fulltime input {
  appearance: none;
  width: 26px;
  height: 26px;
  margin: 0;
  border: 2px solid #767676;
  border-radius: 5px;
  background: #fff;
}
.submit {
  width: 181px;
  height: 80px;
  border-radius: 8px;
  background: #5f6be9;
  color: #fff;
}

.jobs {
  display: grid;
  grid-template-columns: repeat(3, 1fr);
  row-gap: 160px;
  padding-top: 226px;
}
.job {
  position: relative;
  height: 512px;
  margin: 0 94px;
  padding: 121px 64px 31px;
  border-radius: 8px;
  background: #fff;
  font-size: 31px;
  line-height: 48px;
}
.meta, .company { color: #6b7280; font-weight: 300; }
.job h2 { margin: 40px 0; font-size: 38px; line-height: 56px; font-weight: 700; }
.place { margin-top: 80px; color: #5f6be9; }
.logo {
  position: absolute;
  left: 64px;
  top: -40px;
  display: flex;
  align-items: center;
  justify-content: center;
  width: 80px;
  height: 80px;
  overflow: hidden;
  border-radius: 18px;
  color: #fff;
}
.logo svg { width: 80px; height: 80px; }
.logo-scoot { background: #df9739; font-size: 29px; font-weight: 600; }
.logo-blogr { background: #d75735; font-size: 44px; font-weight: 900; }
.logo-vector { background: #373641; font-family: "DejaVu Sans", sans-serif; font-size: 14px; font-weight: 700; }
.logo-office { background: #2e54bf; }
.logo-pod { background: #15202f; }
.logo-creative { background: #471d4c; }

/* Utility window that peeks in from the right edge */
.side-window {
  position: absolute;
  right: -40px;
  top: 1333px;
  width: 63px;
  height: 262px;
  padding-top: 206px;
  border: 2px solid #1b1b1b;
  border-radius: 18px;
  background: #4b4b4b;
  box-shadow: inset 0 0 0 2px #777, 0 12px 50px rgba(0, 0, 0, .35);
}
.side-window::before {
  content: "";
  display: block;
  margin-left: 4px;
  border-top: 3px dotted #66c163;
}

/* Dock */
.dock {
  position: absolute;
  left: 50%;
  bottom: 10px;
  display: flex;
  align-items: center;
  gap: 22px;
  height: 114px;
  padding: 0 18px 8px 15px;
  border: 2px solid rgba(255, 255, 255, .22);
  border-radius: 38px;
  background: linear-gradient(90deg, #101011, #141415 8%, #2c2825 15%, #262427 25%, #232024 37%, #3f3833 53%, #3a3d3a 65%, #393c3a 80%, #34393d);
  background-clip: padding-box;
  background-color: #151515;
  box-shadow: 0 0 2px #000, 0 4px 90px rgba(0, 0, 0, .3);
  transform: translateX(-50%);
}
.app { position: relative; width: 74px; height: 74px; }
.app svg { width: 74px; height: 74px; }
.running::after {
  content: "";
  position: absolute;
  left: 33px;
  bottom: -19px;
  width: 8px;
  height: 8px;
  border-radius: 50%;
  background: #b0afb0;
}
.t-letter { fill: #fff; font: 700 22px Inter, sans-serif; }
.dock-line { width: 2px; height: 82px; margin: 0 8px 0 12px; background: #6c6c6c; }
.thumbs { display: flex; gap: 10px; margin: 0 -2px 0 -6px; }
.thumb { position: relative; width: 86px; height: 74px; }
.thumb > svg { width: 86px; height: 74px; overflow: visible; }
.thumb > .badge { position: absolute; right: 1px; bottom: -4px; width: 28px; height: 28px; }
.trash svg { width: 66px; height: 86px; }
```
